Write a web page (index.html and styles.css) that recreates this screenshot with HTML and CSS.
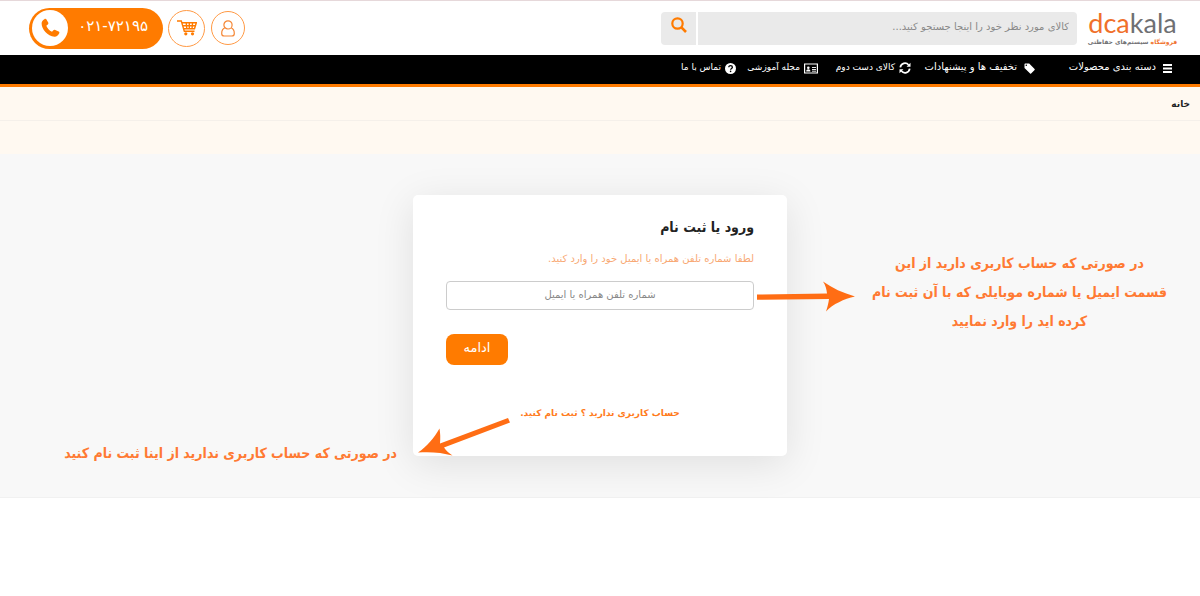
FILE: index.html
```html
<!DOCTYPE html>
<html lang="fa" dir="rtl">
<head>
<meta charset="utf-8">
<title>dcakala</title>
<link rel="stylesheet" href="styles.css">
</head>
<body>
<header class="header">
  <a class="logo" href="#">
    <span class="logo-name" dir="ltr"><span class="accent">dca</span>kala</span>
    <span class="logo-tag"><span class="accent">فروشگاه</span> سیستم‌های حفاظتی</span>
  </a>
  <form class="search">
    <input class="search-input" type="search" aria-label="جستجو" placeholder="کالای مورد نظر خود را اینجا جستجو کنید...">
    <button class="search-button" type="button" aria-label="جستجو">
      <svg width="16" height="16" viewBox="0 0 16 16" fill="none" stroke="currentColor"><circle cx="6.5" cy="6.5" r="5.2" stroke-width="2.2"/><path d="M10.4 10.4 15 15" stroke-width="2.6"/></svg>
    </button>
  </form>
  <div class="actions">
    <a class="round round-user" href="#" aria-label="حساب کاربری">
      <svg width="14" height="17" viewBox="0 0 14 17" fill="none" stroke="currentColor" stroke-width="1.2"><circle cx="7" cy="4.9" r="4.1"/><path d="M3.9 7.800C1.700 8.800.7 10.900.7 13.400c0 1.900.9 2.600 2.700 2.600h7.200c1.800 0 2.700-.7 2.700-2.600 0-2.500-1-4.600-3.200-5.600"/></svg>
    </a>
    <a class="round round-cart" href="#" aria-label="سبد خرید">
      <svg width="20" height="16" viewBox="0 0 20 16" fill="none" stroke="currentColor" stroke-width="1.4"><path d="M0 1h4.300l3 10.200h10.200M4.800 2.800h14.500l-1.800 6H6.600M5.600 5.800h13M9.200 2.800l.6 6M12.300 2.800v6M15.600 2.800l-.6 6"/><circle cx="8.800" cy="13.800" r="1.600" fill="currentColor" stroke="none"/><circle cx="15.500" cy="13.800" r="1.600" fill="currentColor" stroke="none"/></svg>
    </a>
    <a class="phone" href="tel:02172195">
      <span class="phone-number" dir="ltr">۰۲۱-۷۲۱۹۵</span>
      <span class="phone-icon">
        <svg width="20" height="20" viewBox="0 0 20 20" fill="currentColor"><path d="M4.400 1.200c.8-.6 1.600-.4 2.100.4l1.700 3c.4.7.2 1.400-.4 1.900L6.300 7.700c1 2.600 3 4.800 5.700 6l1.400-1.500c.5-.5 1.200-.7 1.900-.3l3.300 1.700c.8.4 1 1.200.5 2-1 1.900-2.500 3.200-4.600 3.100C7.500 18.400 1.500 11.300 1.600 5.300c0-1.700 1.100-3.100 2.800-4.100z"/></svg>
      </span>
    </a>
  </div>
</header>

<nav class="nav">
  <a class="nav-item" href="#">
    <svg class="nav-icon" width="9" height="9" viewBox="0 0 9 9" fill="none" stroke="currentColor" stroke-width="2"><path d="M0 1h9M0 4.500h9M0 8h9"/></svg>
    <span class="nav-text nav-text-wide">دسته بندی محصولات</span>
  </a>
  <a class="nav-item" href="#">
    <svg class="nav-icon" width="11" height="11" viewBox="0 0 11 11" fill="currentColor"><path fill-rule="evenodd" d="M.5 1.200c0-.5.3-.7.700-.7h4L10.600 6c.3.300.300.700 0 1l-3.500 3.500c-.3.300-.7.300-1 0L.5 5zM2.300 1.500a.8.8 0 1 0 0 1.600.8.8 0 0 0 0-1.600z"/></svg>
    <span class="nav-text nav-text-wide">تخفیف ها و پیشنهادات</span>
  </a>
  <a class="nav-item" href="#">
    <svg class="nav-icon" width="12" height="12" viewBox="0 0 12 12" fill="none" stroke="currentColor" stroke-width="1.700"><path d="M1.300 5.300A4.700 4.700 0 0 1 9.600 3M10.700 6.700A4.700 4.700 0 0 1 2.400 9"/><path d="M11.500.8v4H7.600zM.5 11.200v-4h3.900z" fill="currentColor" stroke="none"/></svg>
    <span class="nav-text">کالای دست دوم</span>
  </a>
  <a class="nav-item" href="#">
    <svg class="nav-icon" width="14" height="11" viewBox="0 0 14 11" fill="none" stroke="currentColor"><path d="M.6 1h12.800v9H.6z" stroke-width="1.200"/><path d="M8 4.500h4M8 6.500h4M8 8.200h4" stroke-width=".9"/><path d="M2.200 8.500c0-1.500.8-2.200 2.100-2.200s2.100.7 2.100 2.200z" fill="currentColor" stroke="none"/><circle cx="4.300" cy="4.700" r="1.300" fill="currentColor" stroke="none"/></svg>
    <span class="nav-text">مجله آموزشی</span>
  </a>
  <a class="nav-item" href="#">
    <svg class="nav-icon" width="11" height="11" viewBox="0 0 11 11"><circle cx="5.500" cy="5.500" r="5.500" fill="#fff"/><path d="M3.800 4.300c0-2.300 3.600-2.200 3.600 0 0 1.200-1.800 1.200-1.800 2.500" fill="none" stroke="#000" stroke-width="1.300"/><circle cx="5.600" cy="8.400" r=".8"/></svg>
    <span class="nav-text">تماس با ما</span>
  </a>
</nav>

<div class="crumbs"><a class="crumb" href="#">خانه</a></div>
<div class="strip"></div>

<main class="stage">
  <p class="note note-login">در صورتی که حساب کاربری دارید از این<br>قسمت ایمیل یا شماره موبایلی که با آن ثبت نام<br>کرده اید را وارد نمایید</p>
  <form class="card">
    <h1 class="title">ورود یا ثبت نام</h1>
    <label class="hint" for="login">لطفا شماره تلفن همراه یا ایمیل خود را وارد کنید.</label>
    <input class="field" id="login" type="text" placeholder="شماره تلفن همراه یا ایمیل">
    <button class="submit" type="button">ادامه</button>
    <a class="signup" href="#">حساب کاربری ندارید ؟ ثبت نام کنید.</a>
    <svg class="arrow arrow-login" width="98" height="32" viewBox="0 0 98 32" fill="#ff6d14"><path d="M0 14.500 70 13.500C69.500 9 68.500 5 66 1.500 75 8 86 13 98 16.500 87 19 76 24 69 31.500 70.500 27 71.500 23 72 19L0 19.800z"/></svg>
    <svg class="arrow arrow-signup" width="94" height="42" viewBox="0 0 94 42" fill="#ff6d14"><path d="M91 1 93 5.500 27 30.500c2.500 3.500 5 5.500 8.500 8C25 35.500 13 34.500 1 35.500 10 29.500 17 21 22.500 11.500c.8 5 1 9.500.5 15z"/></svg>
  </form>
  <p class="note note-signup">در صورتی که حساب کاربری ندارید از اینا ثبت نام کنید</p>
</main>
</body>
</html>
```

FILE: styles.css
```css
* { box-sizing: border-box; }

body {
  margin: 0;
  background: #fff;
  color: #222;
  font-family: "DejaVu Sans", sans-serif;
  font-size: 10px;
}

a { color: inherit; text-decoration: none; }
svg { display: block; flex: none; }
input, button { font-family: inherit; margin: 0; }

.header {
  display: flex;
  align-items: center;
  height: 55px;
  padding: 0 25px 0 29px;
  border-top: 1px solid #e6d8da;
}

.logo {
  display: flex;
  flex-direction: column;
  align-items: center;
  width: 85px;
  color: #6f7073;
  white-space: nowrap;
}
.logo-name { font: 27px/28px Lato, sans-serif; }
.logo-tag { font-size: 6px; line-height: 10px; font-weight: bold; }
.accent { color: #f0702a; }

.search { display: flex; flex: 0 1 416px; gap: 2px; margin-right: 13px; }
.search-input {
  flex: 1;
  min-width: 0;
  height: 33px;
  padding: 0 8px 3px;
  border: 0;
  border-radius: 0 4px 4px 0;
  background: #eaeaea;
  font-size: 10px;
}
.search-input::placeholder { color: #888; }
.search-button {
  display: flex;
  align-items: center;
  justify-content: center;
  width: 35px;
  padding: 0 0 6px;
  border: 0;
  border-radius: 4px 0 0 4px;
  background: #eaeaea;
  color: #ff7b00;
}

.actions { display: flex; align-items: center; margin-right: auto; }
.round {
  display: flex;
  align-items: center;
  justify-content: center;
  border: 1px solid #ff9a45;
  border-radius: 50%;
  color: #f58634;
}
.round-user { width: 34px; height: 34px; margin-left: 6px; }
.round-cart { width: 37px; height: 37px; margin-left: 5px; color: #ff7b00; }
.phone {
  display: flex;
  align-items: center;
  justify-content: space-between;
  width: 134px;
  height: 41px;
  padding: 0 15px 0 3px;
  border-radius: 21px;
  background: #ff7b00;
  color: #fff;
}
.phone-number { padding-bottom: 4px; font-size: 15px; }
.phone-icon {
  display: flex;
  align-items: center;
  justify-content: center;
  width: 36px;
  height: 36px;
  border-radius: 50%;
  background: #fff;
  color: #ff7b00;
}

.nav {
  display: grid;
  grid-template-columns: 137px 124px 93px 82px auto;
  justify-content: start;
  align-items: center;
  height: 32px;
  padding: 0 28px 3px;
  border-bottom: 3px solid #ff7b00;
  background: #000;
  color: #fff;
}
.nav-item { display: flex; align-items: center; gap: 4px; white-space: nowrap; }
.nav-text { font-size: 9px; line-height: 16px; padding-bottom: 2px; }
.nav-text-wide { margin-right: 3px; font-size: 10px; }

.crumbs {
  height: 34px;
  padding: 10px;
  border-bottom: 1px solid #f5f0ea;
  background: #fff9f1;
  line-height: 14px;
}
.crumb { font-size: 9px; font-weight: bold; }
.strip { height: 33px; background: #fff9f1; }

.stage {
  display: grid;
  grid-template-columns: 1fr 374px 1fr;
  align-items: start;
  min-height: 344px;
  padding: 41px 0 28px;
  border-bottom: 1px solid #f1f1f1;
  background: #f8f8f8;
}

.card {
  position: relative;
  display: flex;
  flex-direction: column;
  align-items: flex-start;
  min-height: 261px;
  padding: 20px 33px;
  border-radius: 5px;
  background: #fff;
  box-shadow: 0 8px 40px rgba(0, 0, 0, .1);
}
.title {
  margin: 0;
  font-family: "DejaVu Sans Condensed", "DejaVu Sans", sans-serif;
  font-size: 14px;
  line-height: 24px;
}
.hint { margin-top: 12px; color: #f8a873; font-size: 10px; line-height: 16px; }
.field {
  width: 100%;
  height: 29px;
  margin-top: 14px;
  padding: 0 8px 2px;
  border: 1px solid #ccc;
  border-radius: 4px;
  font-size: 10px;
  text-align: center;
}
.field::placeholder { color: #888; }
.submit {
  align-self: flex-end;
  width: 62px;
  height: 31px;
  margin-top: 24px;
  padding: 0 0 4px;
  border: 0;
  border-radius: 8px;
  background: #ff7b00;
  color: #fff;
  font-size: 13px;
}
.signup {
  align-self: center;
  margin-top: 40px;
  color: #ff7b1c;
  font-size: 9px;
  font-weight: bold;
  line-height: 16px;
}

.note {
  margin: 0;
  color: #ff7a33;
  font-family: "DejaVu Sans Condensed", "DejaVu Sans", sans-serif;
  font-size: 14px;
  font-weight: bold;
  line-height: 29px;
  white-space: nowrap;
}
.note-login { padding: 54px 28px 0 80px; text-align: center; }
.note-signup { padding: 244px 16px 0 0; }

.arrow { position: absolute; }
.arrow-login { left: 344px; top: 85px; }
.arrow-signup { left: 4px; top: 222px; }
```
